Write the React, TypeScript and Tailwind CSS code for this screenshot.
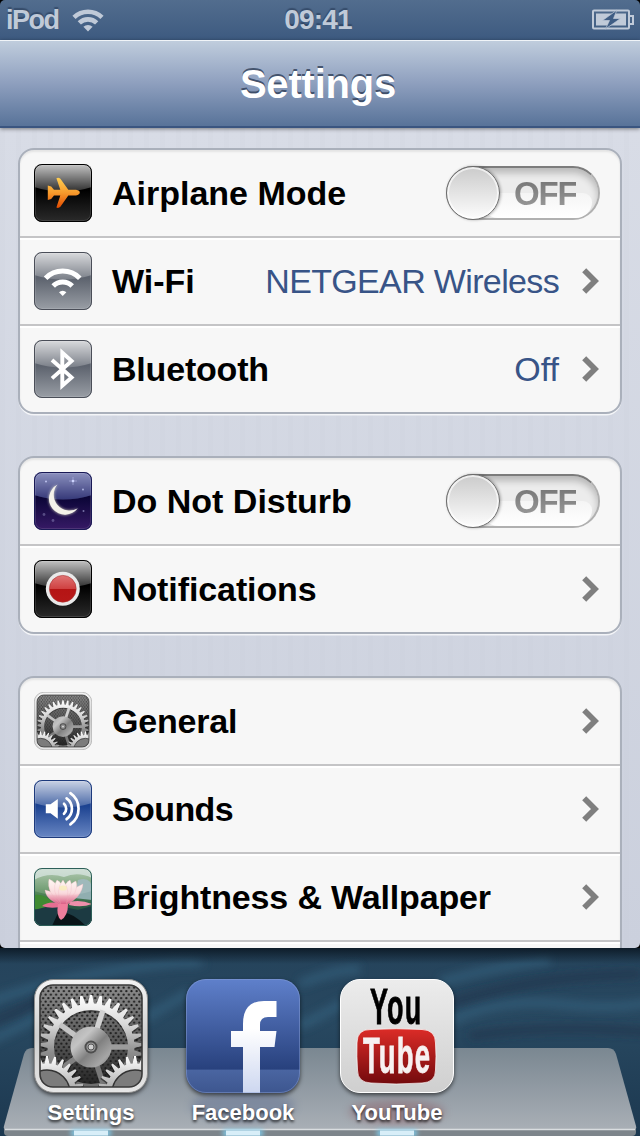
import type { ReactNode } from "react";

const SANS = "font-['Liberation_Sans',Arial,sans-serif]";

function gearPath(cx: number, cy: number, tip: number, root: number, teeth: number) {
  const step = (Math.PI * 2) / teeth;
  const at = (r: number, a: number) =>
    `${(cx + r * Math.cos(a)).toFixed(2)} ${(cy + r * Math.sin(a)).toFixed(2)}`;
  let d = "";
  for (let i = 0; i < teeth; i++) {
    const a = i * step - Math.PI / 2;
    d += `${i ? "L" : "M"}${at(root, a - step * 0.36)}L${at(tip, a - step * 0.12)}L${at(tip, a + step * 0.12)}L${at(root, a + step * 0.36)}`;
  }
  return d + "Z";
}

function ringHole(cx: number, cy: number, r: number) {
  return `M${cx - r} ${cy}a${r} ${r} 0 1 0 ${r * 2} 0a${r} ${r} 0 1 0 ${-r * 2} 0Z`;
}

const spokes = [
  { angle: 0, fill: "#9c9c9c" },
  { angle: -72, fill: "#d2d2d2" },
  { angle: -144, fill: "#c4c4c4" },
  { angle: 144, fill: "#808080" },
  { angle: 72, fill: "#787878" },
];

// Used both as the 58px row icon and the 114px dock icon
function GearIcon({ id, className }: { id: string; className: string }) {
  return (
    <svg viewBox="0 0 114 114" className={className}>
      <defs>
        <linearGradient id={`${id}-frame`} x1="0" y1="0" x2="0" y2="1">
          <stop offset="0" stopColor="#f4f4f4" />
          <stop offset="0.5" stopColor="#cfcfcf" />
          <stop offset="1" stopColor="#e6e6e6" />
        </linearGradient>
        <linearGradient id={`${id}-plate`} x1="0" y1="0" x2="0" y2="1">
          <stop offset="0" stopColor="#8c8c8c" />
          <stop offset="0.55" stopColor="#585858" />
          <stop offset="1" stopColor="#222" />
        </linearGradient>
        <linearGradient id={`${id}-wheel`} gradientUnits="userSpaceOnUse" x1="0" y1="16" x2="0" y2="112">
          <stop offset="0" stopColor="#ffffff" />
          <stop offset="0.3" stopColor="#dadada" />
          <stop offset="0.6" stopColor="#8c8c8c" />
          <stop offset="1" stopColor="#686868" />
        </linearGradient>
        <linearGradient id={`${id}-small`} gradientUnits="userSpaceOnUse" x1="0" y1="77" x2="0" y2="108">
          <stop offset="0" stopColor="#ffffff" />
          <stop offset="1" stopColor="#b0b0b0" />
        </linearGradient>
        <linearGradient id={`${id}-hub`} x1="0" y1="0" x2="1" y2="1">
          <stop offset="0" stopColor="#a8a8a8" />
          <stop offset="0.3" stopColor="#c4c4c4" />
          <stop offset="0.55" stopColor="#808080" />
          <stop offset="0.8" stopColor="#a6a6a6" />
          <stop offset="1" stopColor="#6f6f6f" />
        </linearGradient>
        <pattern id={`${id}-dots`} width="5.2" height="7" patternUnits="userSpaceOnUse">
          <circle cx="1.3" cy="1.7" r="1.1" fill="#1c1c1c" />
          <circle cx="3.9" cy="5.2" r="1.1" fill="#1c1c1c" />
        </pattern>
        <clipPath id={`${id}-clip`}>
          <rect x="6" y="6" width="102" height="102" rx="13" />
        </clipPath>
      </defs>
      <rect x="0.5" y="0.5" width="113" height="113" rx="19" fill={`url(#${id}-frame)`} stroke="#8d8d8d" />
      <g clipPath={`url(#${id}-clip)`}>
        <rect x="6" y="6" width="102" height="102" fill={`url(#${id}-plate)`} />
        <rect x="6" y="6" width="102" height="102" fill={`url(#${id}-dots)`} />
        <path d={gearPath(57, 70, 52, 43.5, 33) + ringHole(57, 70, 37)} fillRule="evenodd" fill="#000" opacity="0.35" />
        <path d={gearPath(57, 68, 52, 43.5, 33) + ringHole(57, 68, 37)} fillRule="evenodd" fill={`url(#${id}-wheel)`} />
        {spokes.map((spoke) => (
          <rect
            key={spoke.angle}
            x="74"
            y="65.3"
            width="21.5"
            height="5.4"
            fill={spoke.fill}
            transform={`rotate(${spoke.angle} 57 68)`}
          />
        ))}
        <circle cx="57" cy="68" r="20.5" fill={`url(#${id}-hub)`} />
        <circle cx="57" cy="68" r="6.5" fill="#4d4d4d" />
        <circle cx="57" cy="68" r="4.6" fill="#999" />
        <circle cx="57" cy="68" r="3" fill="#d0d0d0" stroke="#555" />
        {[13, 101].map((cx) => (
          <g key={cx}>
            <path d={gearPath(cx, 115.5, 38, 30.5, 28)} fill="#000" opacity="0.45" />
            <path d={gearPath(cx, 114, 37, 29.5, 28)} fill={`url(#${id}-small)`} />
            <circle cx={cx} cy="114" r="23" fill="#7c7c7c" stroke="#333" strokeWidth="1.4" />
          </g>
        ))}
      </g>
      <rect x="6" y="6" width="102" height="102" rx="13" fill="none" stroke="#3a3a3a" strokeWidth="1.6" />
    </svg>
  );
}

function AppTile({
  id,
  colors,
  border,
  children,
}: {
  id: string;
  colors: [string, string];
  border: string;
  children: ReactNode;
}) {
  return (
    <svg viewBox="0 0 58 58" className="size-[58px]">
      <defs>
        <linearGradient id={`${id}-bg`} x1="0" y1="0" x2="0" y2="1">
          <stop offset="0.45" stopColor={colors[0]} />
          <stop offset="1" stopColor={colors[1]} />
        </linearGradient>
        <linearGradient id={`${id}-gloss`} x1="0" y1="0" x2="0" y2="1">
          <stop offset="0" stopColor="#fff" stopOpacity="0.78" />
          <stop offset="1" stopColor="#fff" stopOpacity="0.18" />
        </linearGradient>
        <clipPath id={`${id}-clip`}>
          <rect width="58" height="58" rx="8" />
        </clipPath>
      </defs>
      <g clipPath={`url(#${id}-clip)`}>
        <rect width="58" height="58" fill={`url(#${id}-bg)`} />
        <path d="M0 0H58V23Q29 32 0 23Z" fill={`url(#${id}-gloss)`} />
        {children}
      </g>
      <rect x="1.5" y="1.5" width="55" height="55" rx="6.5" fill="none" stroke="#fff" strokeOpacity="0.12" />
      <rect x="0.5" y="0.5" width="57" height="57" rx="7.5" fill="none" stroke={border} />
    </svg>
  );
}

function AirplaneIcon() {
  return (
    <AppTile id="plane" colors={["#000000", "#2b2b2b"]} border="#000">
      <defs>
        <linearGradient id="plane-fill" x1="0" y1="0" x2="0" y2="1">
          <stop offset="0" stopColor="#ffcf52" />
          <stop offset="0.5" stopColor="#f79a2c" />
          <stop offset="1" stopColor="#e24a00" />
        </linearGradient>
      </defs>
      <path
        d="M13.8 21.6 L17.2 22.4 L20 25.8 H26.3 L22.4 14.2 Q24.6 13.2 26.4 14.8 L34.3 25.8 H42 Q45.8 26.4 45.8 28.6 Q45.8 30.8 42 31.4 H34.3 L26.4 42.8 Q24.6 44.6 22.4 43.6 L26.3 31.4 H20 L17.2 35 L13.8 36 Z"
        fill="url(#plane-fill)"
      />
    </AppTile>
  );
}

function WifiIcon() {
  return (
    <AppTile id="wifi" colors={["#5d636e", "#9a9fa6"]} border="#4a4e58">
      <g fill="none" stroke="#fff" strokeWidth="5">
        <path d="M11.6 26.2A24 24 0 0 1 45.8 26.2" />
        <path d="M19.2 34A13.3 13.3 0 0 1 38.2 34" />
      </g>
      <path d="M28.7 44L25 40.2A5.2 5.2 0 0 1 32.4 40.2Z" fill="#fff" />
    </AppTile>
  );
}

function BluetoothIcon() {
  return (
    <AppTile id="bt" colors={["#5d636e", "#9a9fa6"]} border="#4a4e58">
      <path
        d="M18 20L37.6 37.4L28.3 45.6V12.6L37.6 21L18 38.4"
        fill="none"
        stroke="#fff"
        strokeWidth="3.9"
        strokeMiterlimit="8"
      />
    </AppTile>
  );
}

function MoonIcon() {
  return (
    <AppTile id="moon" colors={["#0c0638", "#371a66"]} border="#191955">
      <path d="M0 0H58V23Q29 32 0 23Z" fill="#3444a4" opacity="0.4" />
      <g fill="#cfd4ff">
        <circle cx="12" cy="9.5" r="1" opacity="0.8" />
        <circle cx="39" cy="9" r="1.3" />
        <circle cx="49" cy="17.5" r="1" opacity="0.7" />
        <circle cx="49.5" cy="39" r="1" opacity="0.5" />
        <circle cx="10" cy="42.5" r="1.4" opacity="0.3" />
        <circle cx="19" cy="48.5" r="1.4" opacity="0.3" />
      </g>
      <path d="M35 9H43M39 5V13" stroke="#cfd4ff" strokeWidth="0.7" opacity="0.6" />
      <path
        d="M23.5 12.5A16 16 0 1 0 43.8 36.2A15.8 15.8 0 0 1 23.5 12.5Z"
        fill="#f4f2ea"
        className="drop-shadow-[0_0_1.5px_rgba(255,255,220,0.8)]"
      />
    </AppTile>
  );
}

function NotificationsIcon() {
  return (
    <AppTile id="notif" colors={["#000000", "#2b2b2b"]} border="#000">
      <defs>
        <linearGradient id="notif-red" x1="0" y1="0" x2="0" y2="1">
          <stop offset="0" stopColor="#e07474" />
          <stop offset="0.5" stopColor="#cf4141" />
          <stop offset="0.51" stopColor="#b51414" />
          <stop offset="1" stopColor="#b71818" />
        </linearGradient>
      </defs>
      <circle cx="28.8" cy="28.8" r="17" fill="#e9e9e9" />
      <circle cx="28.8" cy="28.8" r="13.4" fill="url(#notif-red)" stroke="#a33" strokeWidth="0.6" />
    </AppTile>
  );
}

function SoundsIcon() {
  return (
    <AppTile id="sound" colors={["#1d4391", "#6a88c4"]} border="#1d3a7c">
      <path d="M11.8 24.3H16.5L23.8 19V38.8L16.5 33.3H11.8Z" fill="#fff" />
      <g fill="none" stroke="#fff" strokeWidth="2.7" strokeLinecap="round">
        <path d="M30 23.8A6.8 6.8 0 0 1 30 33.8" />
        <path d="M32.6 18.4A12.8 12.8 0 0 1 32.6 39.2" />
        <path d="M36.4 13.2A19 19 0 0 1 36.4 44.4" />
      </g>
    </AppTile>
  );
}

function LotusIcon() {
  return (
    <svg viewBox="0 0 58 58" className="size-[58px]">
      <defs>
        <linearGradient id="lotus-bg" x1="0" y1="0" x2="0" y2="1">
          <stop offset="0" stopColor="#a9c3a8" />
          <stop offset="0.4" stopColor="#588c5a" />
          <stop offset="0.65" stopColor="#2c5c45" />
          <stop offset="1" stopColor="#16282d" />
        </linearGradient>
        <linearGradient id="lotus-petal" gradientUnits="userSpaceOnUse" x1="0" y1="12" x2="0" y2="38">
          <stop offset="0" stopColor="#fff7f2" />
          <stop offset="0.5" stopColor="#f9d5d8" />
          <stop offset="1" stopColor="#d44a78" />
        </linearGradient>
        <clipPath id="lotus-clip">
          <rect width="58" height="58" rx="8" />
        </clipPath>
      </defs>
      <g clipPath="url(#lotus-clip)">
        <rect width="58" height="58" fill="url(#lotus-bg)" />
        <path d="M0 0H58V10Q44 3 30 9Q14 4 0 12Z" fill="#d7e5e2" opacity="0.7" />
        <path d="M44 12Q58 8 58 22V32L40 30Z" fill="#90aeb0" />
        <path d="M0 27Q10 25 18 34L21 38Q12 42 0 41Z" fill="#408a32" />
        <path d="M0 42L20 37L44 42L58 38V58H0Z" fill="#1c3a42" />
        <path d="M24 45Q36 42 52 58H18Z" fill="#091418" />
        <path d="M24 35Q14 33 8 38Q16 41 26 39Z" fill="#e66e92" />
        <path d="M36 34Q46 31 58 36Q48 40 35 37Z" fill="#ee8faa" />
        <g fill="url(#lotus-petal)" stroke="#e9a6b4" strokeWidth="0.3">
          <path d="M27 37Q12 32 11 22Q20 23 30 34Z" />
          <path d="M32 37Q48 29 49 16Q38 20 29 34Z" />
          <path d="M27 37Q12 24 15 11Q25 15 31 34Z" />
          <path d="M30 37Q46 24 42 13Q33 16 28 34Z" />
          <path d="M28 37Q16 22 23 12Q31 16 32 34Z" />
          <path d="M30 37Q41 22 36 12Q28 16 27 34Z" />
          <path d="M27 37Q21 22 29 12Q37 22 32 37Z" />
        </g>
        <ellipse cx="29" cy="20" rx="4" ry="2.6" fill="#f7eda8" opacity="0.7" />
        <path d="M24 36Q22 48 27 52Q34 48 34 36Z" fill="#ee7d9c" />
        <path d="M0 0H58V23Q29 32 0 23Z" fill="#fff" opacity="0.14" />
      </g>
      <rect x="0.5" y="0.5" width="57" height="57" rx="7.5" fill="none" stroke="#2d5f59" />
    </svg>
  );
}

function Chevron() {
  return (
    <svg viewBox="0 0 17 26" className="w-[17px] h-[26px]">
      <path d="M2.2 2.2L13 13L2.2 23.8" fill="none" stroke="#7f7f7f" strokeWidth="5.7" />
    </svg>
  );
}

function OffSwitch() {
  return (
    <div className="relative h-[54px] w-[154px] rounded-full border-2 border-[#b0b0b0] border-t-[#7c7c7c] bg-[#ececec] shadow-[inset_0_5px_7px_rgba(0,0,0,0.22)]">
      <div className="absolute right-[6px] bottom-0 h-[25px] w-[110px] rounded-[14px_14px_25px_25px] bg-gradient-to-b from-[#f5f5f5] to-white" />
      <span className="absolute left-[66px] top-[6px] bg-gradient-to-b from-[#707070] to-[#a0a0a0] bg-clip-text text-[33px] leading-[40px] font-bold tracking-[-1.2px] text-transparent">
        OFF
      </span>
      <div className="absolute -top-[2px] -left-[2px] size-[54px] rounded-full border-[1.5px] border-[#6c6c6c] bg-gradient-to-b from-[#cbcbcb] to-[#fdfdfd] shadow-[inset_0_0_0_2px_rgba(255,255,255,0.65),1px_0_3px_rgba(0,0,0,0.3)]" />
    </div>
  );
}

type Item = {
  label: string;
  icon: ReactNode;
  tracking?: string;
  value?: string;
  valueTracking?: string;
  toggle?: boolean;
};

const groups: Item[][] = [
  [
    { label: "Airplane Mode", icon: <AirplaneIcon />, toggle: true },
    { label: "Wi-Fi", icon: <WifiIcon />, value: "NETGEAR Wireless", valueTracking: "tracking-[-0.65px]" },
    { label: "Bluetooth", icon: <BluetoothIcon />, tracking: "tracking-[-0.2px]", value: "Off" },
  ],
  [
    { label: "Do Not Disturb", icon: <MoonIcon />, toggle: true },
    { label: "Notifications", icon: <NotificationsIcon />, tracking: "tracking-[-0.1px]" },
  ],
  [
    { label: "General", icon: <GearIcon id="general" className="size-[58px]" />, tracking: "tracking-[-0.2px]" },
    { label: "Sounds", icon: <SoundsIcon />, tracking: "tracking-[-0.6px]" },
    { label: "Brightness & Wallpaper", icon: <LotusIcon />, tracking: "tracking-[-0.15px]" },
  ],
];

function Row({ item, first, last }: { item: Item; first: boolean; last: boolean }) {
  return (
    <div
      className={`flex items-center pl-[14px] pr-[20px] ${last ? "h-[86px]" : "h-[88px] border-b-2 border-[#c4c4c6]"} ${
        first ? "" : "shadow-[inset_0_2px_0_#fff]"
      }`}
    >
      {item.icon}
      <span
        className={`ml-5 flex-1 whitespace-nowrap text-[34px] leading-10 font-bold text-black ${item.tracking ?? ""}`}
      >
        {item.label}
      </span>
      {item.value && (
        <span
          className={`mr-[23px] whitespace-nowrap text-[34px] leading-10 text-[#385487] ${item.valueTracking ?? ""}`}
        >
          {item.value}
        </span>
      )}
      {item.toggle ? (
        <OffSwitch />
      ) : (
        <div className="mr-px">
          <Chevron />
        </div>
      )}
    </div>
  );
}

function StatusBar() {
  return (
    <div className="bg-black">
      <div className="grid h-10 grid-cols-3 items-center rounded-t-[5px] bg-gradient-to-b from-[#526d8e] to-[#3d5a80] px-[6px] leading-8 font-bold text-[#c0cad8] [text-shadow:0_-2px_1px_rgba(20,35,60,0.4)]">
        <div className="flex items-center">
          <span className="w-[66px] text-[27px] tracking-[-1.5px]">iPod</span>
          <svg viewBox="0 0 32 24" className="h-6 w-8">
            <g fill="none" stroke="#c0cad8" strokeWidth="4.6">
              <path d="M2 9.3A20.4 20.4 0 0 1 30 9.3" />
              <path d="M7.3 14.9A12.4 12.4 0 0 1 24.7 14.9" />
            </g>
            <path d="M16 23.5L11.4 18.8A6.6 6.6 0 0 1 20.6 18.8Z" fill="#c0cad8" />
          </svg>
        </div>
        <span className="pr-1 text-center text-[28px] tracking-[-0.8px]">09:41</span>
        <svg viewBox="0 0 42 22" className="h-[22px] w-[42px] justify-self-end">
          <rect x="1" y="1.5" width="36" height="18" rx="1" fill="none" stroke="#c0cad8" strokeWidth="2" />
          <path d="M38 7H41V15H38" fill="none" stroke="#c0cad8" strokeWidth="2" />
          <rect x="4" y="4.5" width="30" height="12" fill="#c0cad8" />
          <path d="M25 1L10.5 11.5H17.5L13.5 20L28.5 9.5H21.5Z" fill="#3f5d84" stroke="#c0cad8" strokeWidth="0.7" />
        </svg>
      </div>
    </div>
  );
}

function FacebookIcon() {
  return (
    <svg viewBox="0 0 114 114" className="size-[114px]">
      <defs>
        <linearGradient id="fb-bg" x1="0" y1="0" x2="0" y2="1">
          <stop offset="0" stopColor="#5f80cb" />
          <stop offset="0.79" stopColor="#28417d" />
          <stop offset="0.8" stopColor="#4a65a1" />
          <stop offset="1" stopColor="#3d568f" />
        </linearGradient>
        <linearGradient id="fb-mark" x1="0" y1="0" x2="0" y2="1">
          <stop offset="0.3" stopColor="#fff" />
          <stop offset="1" stopColor="#cdd7f0" />
        </linearGradient>
      </defs>
      <rect width="114" height="114" rx="20" fill="url(#fb-bg)" />
      <path
        d="M57 114V68H45V52H57V45Q57 22 78 22H90.5V38H82Q74 38 74 46V52H90.5L88.5 68H74V114Z"
        fill="url(#fb-mark)"
      />
      <rect x="0.5" y="0.5" width="113" height="113" rx="19.5" fill="none" stroke="#8ea5da" strokeOpacity="0.45" />
    </svg>
  );
}

function YouTubeIcon() {
  return (
    <svg viewBox="0 0 114 114" className="size-[114px]">
      <defs>
        <linearGradient id="yt-bg" x1="0" y1="0" x2="0" y2="1">
          <stop offset="0" stopColor="#ececec" />
          <stop offset="1" stopColor="#cfcfcf" />
        </linearGradient>
        <linearGradient id="yt-red" x1="0" y1="0" x2="0" y2="1">
          <stop offset="0" stopColor="#dc2c27" />
          <stop offset="1" stopColor="#730a0d" />
        </linearGradient>
      </defs>
      <rect x="0.5" y="0.5" width="113" height="113" rx="19.5" fill="url(#yt-bg)" stroke="#fff" />
      <g className="font-['Liberation_Sans',Arial,sans-serif] font-bold" fontSize="50">
        <text transform="translate(30 44.5) scale(0.54 1)" letterSpacing="2" fill="#000" stroke="#000" strokeWidth="0.8">
          You
        </text>
        <path
          d="M17 64Q17 50 31 50.5Q56 49 82 50.5Q95.5 51 95.5 64Q96.5 77 95.5 91Q95.5 103.5 82 104Q56 106 31 104Q17.5 103.5 17.5 91Q16.5 77 17 64Z"
          fill="url(#yt-red)"
          stroke="#fff"
          strokeOpacity="0.7"
        />
        <text
          transform="translate(23 94) scale(0.55 1)"
          letterSpacing="2"
          fill="#f7f1f1"
          stroke="#f7f1f1"
          strokeWidth="0.8"
        >
          Tube
        </text>
      </g>
    </svg>
  );
}

const dockApps = [
  { label: "Settings", icon: <GearIcon id="dock" className="size-[114px]" />, spacing: "" },
  { label: "Facebook", icon: <FacebookIcon />, spacing: "ml-[38px]" },
  { label: "YouTube", icon: <YouTubeIcon />, spacing: "ml-[40px]" },
];

function DockBackdrop() {
  return (
    <svg viewBox="0 0 640 188" className="absolute inset-0 h-[188px] w-[640px]">
      <defs>
        <linearGradient id="water" x1="0" y1="0" x2="0" y2="1">
          <stop offset="0" stopColor="#25435b" />
          <stop offset="0.4" stopColor="#284860" />
          <stop offset="1" stopColor="#1c3850" />
        </linearGradient>
        <linearGradient id="water-top" x1="0" y1="0" x2="0" y2="1">
          <stop offset="0" stopColor="#0a1621" stopOpacity="0.85" />
          <stop offset="1" stopColor="#0a1621" stopOpacity="0" />
        </linearGradient>
        <linearGradient id="shelf" x1="0" y1="0" x2="0" y2="1">
          <stop offset="0" stopColor="#7a8791" />
          <stop offset="1" stopColor="#a9afb6" />
        </linearGradient>
        <filter id="soft" x="-20%" y="-100%" width="140%" height="300%">
          <feGaussianBlur stdDeviation="4" />
        </filter>
        <filter id="glow" x="-50%" y="-200%" width="200%" height="500%">
          <feGaussianBlur stdDeviation="2.5" />
        </filter>
      </defs>
      <rect width="640" height="188" fill="url(#water)" />
      <g fill="none" stroke="#35617d" strokeWidth="9" opacity="0.7" filter="url(#soft)">
        <path d="M-10 54Q40 34 120 22T200 18" />
        <path d="M-10 92Q20 80 40 66" />
        <path d="M146 70Q170 56 190 44" />
        <path d="M300 36Q340 20 360 22" />
        <path d="M440 34Q490 20 550 12" />
        <path d="M452 72Q500 50 560 56T650 54" />
        <path d="M300 78Q320 68 345 54" />
      </g>
      <g fill="none" stroke="#203249" strokeWidth="7" opacity="0.7" filter="url(#soft)">
        <path d="M452 54Q500 40 540 34T640 26" />
        <path d="M470 88Q540 76 650 84" />
        <path d="M-10 74Q20 64 40 52" />
      </g>
      <rect width="640" height="16" fill="url(#water-top)" />
      <path d="M4 181H636V184Q636 188 632 188H8Q4 188 4 184Z" fill="#7d858b" />
      <path
        d="M32 100H608Q614 100 616 106L636 178Q637 182 633 182H7Q3 182 4 178L24 106Q26 100 32 100Z"
        fill="url(#shelf)"
      />
      <path d="M5 181.5H635" stroke="#d9dde0" strokeWidth="1.3" />
      <ellipse cx="243" cy="158" rx="52" ry="16" fill="#56678f" opacity="0.4" filter="url(#soft)" />
      <ellipse cx="397" cy="164" rx="48" ry="12" fill="#8a5a62" opacity="0.45" filter="url(#soft)" />
      {[91, 243, 397].map((x) => (
        <g key={x}>
          <rect x={x - 20} y="182" width="40" height="6" fill="#7fd0f2" filter="url(#glow)" />
          <rect x={x - 17} y="182.5" width="34" height="5" fill="#d8eef8" />
        </g>
      ))}
    </svg>
  );
}

export default function App() {
  return (
    <div className={`flex h-[1136px] w-[640px] flex-col overflow-hidden bg-black ${SANS}`}>
      <StatusBar />
      <header className="z-10 flex h-[88px] shrink-0 items-center justify-center border-t border-b-2 border-t-[#f0f4f8] border-b-[#3a5580] bg-gradient-to-b from-[#c0cddd] via-[#8e9fbe] to-[#587399] pr-1 shadow-[0_1px_4px_rgba(0,0,0,0.45)]">
        <h1 className="text-[40px] leading-[46px] font-bold tracking-[-0.2px] text-white [text-shadow:0_-2px_0_rgba(40,55,80,0.75)]">
          Settings
        </h1>
      </header>

      <main className="h-[820px] shrink-0 overflow-hidden rounded-b-[5px] bg-[#d8dce6] bg-[linear-gradient(180deg,rgba(190,196,212,0)_0%,rgba(190,196,212,0.5)_100%),repeating-linear-gradient(90deg,#d6dae4_0px,#d6dae4_5px,#d8dce6_5px,#d8dce6_16px)] px-[18px] pt-5">
        <div className="flex flex-col gap-[42px]">
          {groups.map((items, g) => (
            <section
              key={g}
              className={`rounded-[16px] border-2 border-[#aab0bb] bg-[#f7f7f7] ${
                g === 2 ? "h-[400px]" : ""
              } shadow-[0_2px_0_-0.5px_rgba(255,255,255,0.75),inset_0_2px_2px_rgba(0,0,0,0.08)]`}
            >
              {items.map((item, i) => (
                <Row key={item.label} item={item} first={i === 0} last={g !== 2 && i === items.length - 1} />
              ))}
              {g === 2 && <div className="h-[2px] bg-white" />}
            </section>
          ))}
        </div>
      </main>

      <footer className="relative h-[188px] shrink-0">
        <DockBackdrop />
        <div className="relative flex pl-[34px] pt-[31px]">
          {dockApps.map((app) => (
            <div key={app.label} className={`flex w-[114px] flex-col items-center ${app.spacing}`}>
              <div className="drop-shadow-[0_2px_2px_rgba(0,0,0,0.6)]">{app.icon}</div>
              <span className="mt-[7px] text-[22px] leading-[26px] font-bold text-white [text-shadow:0_2px_3px_rgba(0,0,0,0.75)]">
                {app.label}
              </span>
            </div>
          ))}
        </div>
      </footer>
    </div>
  );
}
